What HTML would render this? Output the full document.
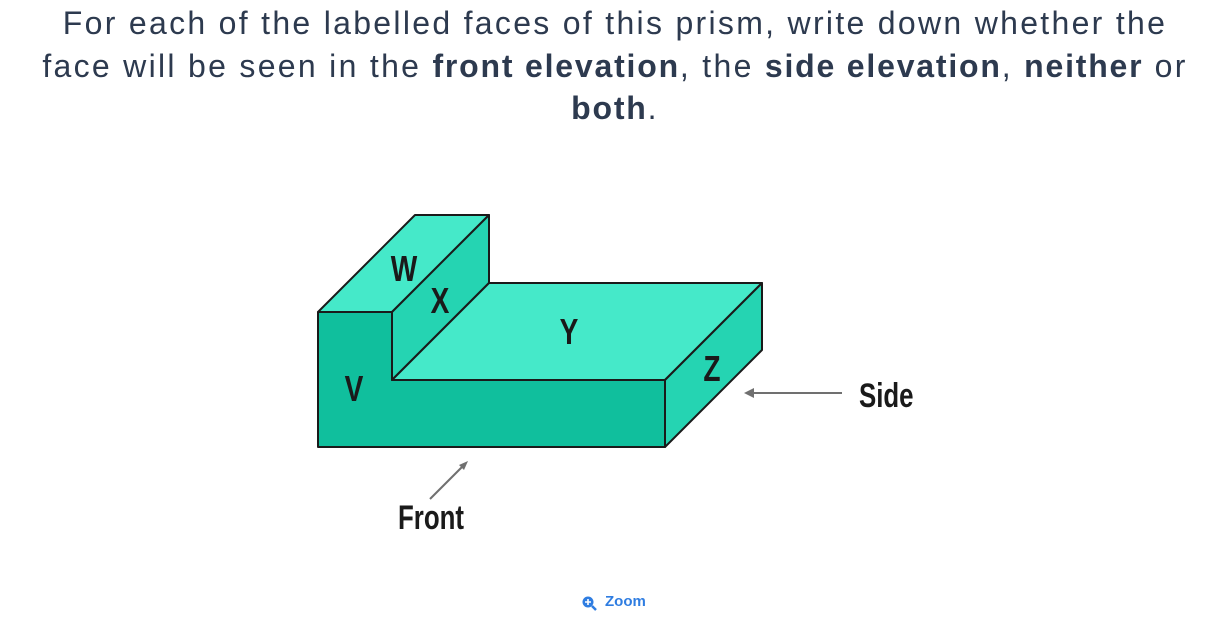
<!DOCTYPE html>
<html><head><meta charset="utf-8"><style>
html,body{margin:0;padding:0;background:#fff;width:1230px;height:633px;overflow:hidden}
.t{position:absolute;left:0;width:1230px;text-align:center;font-family:"Liberation Sans",sans-serif;font-size:32px;color:#2d3a4f;white-space:nowrap;letter-spacing:2.3px}
b{font-weight:bold;letter-spacing:1.8px}
.zoom{position:absolute;left:581px;top:593px;font-family:"Liberation Sans",sans-serif;font-size:15px;font-weight:bold;color:#2f7de1}
</style></head><body>
<div class="t" style="top:5px">For each of the labelled faces of this prism, write down whether the</div>
<div class="t" style="top:48px">face will be seen in the <b>front elevation</b>, the <b>side elevation</b>, <b>neither</b> or</div>
<div class="t" style="top:90px"><b>both</b>.</div>
<svg width="1230" height="633" style="position:absolute;left:0;top:0">
<g stroke="#1a1a1a" stroke-width="2" stroke-linejoin="round">
<polygon points="318,312 392,312 392,380 665,380 665,447 318,447" fill="#10bf9d"/>
<polygon points="318,312 392,312 489,215 415,215" fill="#45e9c9"/>
<polygon points="392,312 489,215 489,283 392,380" fill="#25d4b2"/>
<polygon points="392,380 489,283 762,283 665,380" fill="#45e9c9"/>
<polygon points="665,380 762,283 762,350 665,447" fill="#25d4b2"/>
</g>
<g font-family="Liberation Sans Narrow,Liberation Sans,sans-serif" font-weight="bold" fill="#1a1a1a" font-size="36">
<text x="404" y="281" text-anchor="middle" transform="translate(404 0) scale(0.78 1) translate(-404 0)">W</text>
<text x="440" y="313" text-anchor="middle" transform="translate(440 0) scale(0.78 1) translate(-440 0)">X</text>
<text x="569" y="344" text-anchor="middle" transform="translate(569 0) scale(0.78 1) translate(-569 0)">Y</text>
<text x="712" y="381" text-anchor="middle" transform="translate(712 0) scale(0.78 1) translate(-712 0)">Z</text>
<text x="354" y="401" text-anchor="middle" transform="translate(354 0) scale(0.78 1) translate(-354 0)">V</text>
<text x="859" y="407" font-size="34" transform="translate(859 0) scale(0.76 1) translate(-859 0)">Side</text>
<text x="398" y="529" font-size="34" transform="translate(398 0) scale(0.76 1) translate(-398 0)">Front</text>
</g>
<g stroke="#707070" stroke-width="2" fill="#707070">
<line x1="842" y1="393" x2="752" y2="393"/>
<polygon points="744,393 754,388 754,398" stroke="none"/>
<line x1="430" y1="499" x2="462" y2="467"/>
<polygon points="468,461 459,465 464,470" stroke="none"/>
</g>
<g fill="#2f7de1" stroke="#2f7de1">
<circle cx="588" cy="602" r="5.5" stroke="none"/>
<line x1="592" y1="606" x2="596" y2="610" stroke-width="2.5"/>
<path d="M588 599v6M585 602h6" stroke="#fff" stroke-width="1.6"/>
</g>
</svg>
<div class="zoom" style="left:605px">Zoom</div>
</body></html>
